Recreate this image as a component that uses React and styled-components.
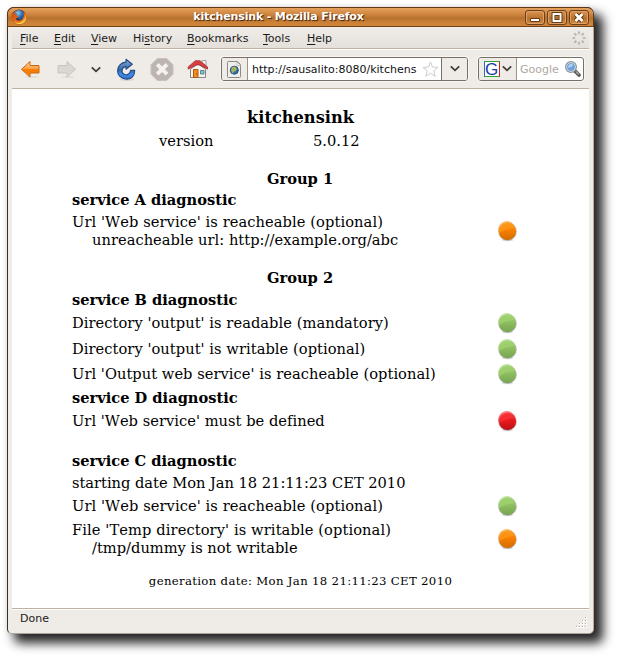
import React from "react";
import styled, { createGlobalStyle } from "styled-components";

const Global = createGlobalStyle`
  * { box-sizing: border-box; }
  body { margin: 0; background: #fff; overflow: hidden; }
`;

const Desktop = styled.div`
  width: 617px;
  height: 658px;
  padding: 7px 0 0 7px;
  overflow: hidden;
  background: #fff;
  font-family: "DejaVu Sans", sans-serif;
`;

const Window = styled.div`
  width: 587px;
  height: 627px;
  display: flex;
  flex-direction: column;
  border: 1px solid #3a3028;
  border-right-color: #b9a995;
  border-bottom-color: #aaa39a;
  border-radius: 7px 7px 5px 5px;
  background: #efebe7;
  box-shadow: 8px 8px 11px 1px rgba(0, 0, 0, 0.86), 0 0 5px rgba(0, 0, 0, 0.08);
`;

const TitleBar = styled.div`
  height: 19px;
  flex: none;
  display: flex;
  align-items: center;
  padding: 0 4px 0 3px;
  border-radius: 6px 6px 0 0;
  border-bottom: 1px solid #70421b;
  box-shadow: 0 0 0 1px #5f3813;
  clip-path: inset(-1px -1px 0 -1px);
  background: linear-gradient(#e5a25d 0, #d68d47 25%, #bf7834 50%, #b5712f 55%, #cb8138 80%, #d08438 100%);
`;

const Title = styled.div`
  flex: 1;
  padding-left: 7px;
  text-align: center;
  font-weight: bold;
  font-size: 11px;
  letter-spacing: -0.15px;
  line-height: 18px;
  color: #fff;
  text-shadow: 1px 1px 1px #3b2109;
`;

const WindowButton = styled.div`
  width: 20px;
  height: 15px;
  margin-left: 2px;
  border: 1px solid #6e4019;
  border-radius: 3px;
  box-shadow: inset 0 0 0 1px #dca168;
  svg { display: block; margin: 0; }
`;

const MenuBar = styled.div`
  height: 22px;
  flex: none;
  margin: 0 4px;
  padding: 1px 3px 0 8px;
  display: flex;
  align-items: center;
  background: linear-gradient(#f0ede9, #e4dfd9);
  border-bottom: 1px solid #bfb09f;
  font-size: 11px;
  color: #1a1a1a;
`;

const MenuItem = styled.div`
  width: ${(p) => p.$width}px;
  line-height: 20px;
  padding-top: 1px;
  white-space: nowrap;
  u { text-underline-offset: 2px; }
`;

const Throbber = styled.svg`
  margin-left: auto;
`;

const ToolBar = styled.div`
  height: 40px;
  flex: none;
  margin: 0 4px;
  padding: 8px 4px 0 8px;
  display: flex;
  align-items: flex-start;
  border-top: 1px solid #fff;
  border-bottom: 1px solid #bfb09f;
`;

const Tool = styled.div`
  width: ${(p) => p.$width}px;
  flex: none;
  display: flex;
  padding-top: ${(p) => p.$top || 0}px;
`;

const Field = styled.div`
  width: ${(p) => p.$width}px;
  height: 24px;
  margin: -1px ${(p) => p.$gap || 0}px 0 0;
  flex: none;
  display: flex;
  align-items: center;
  border: 1px solid #786f66;
  border-radius: 3px;
  background: #fff;
  box-shadow: 0 0 0 1px #f8f6f4;
  font-size: 11px;
  white-space: nowrap;
`;

const FieldPart = styled.div`
  width: ${(p) => p.$width}px;
  height: 100%;
  flex: none;
  display: flex;
  align-items: center;
  justify-content: center;
  border-radius: ${(p) => (p.$left ? "0 2px 2px 0" : "2px 0 0 2px")};
  background: #efebe7;
  border-right: ${(p) => (p.$right ? "1px solid #9c9389" : "0")};
  border-left: ${(p) => (p.$left ? "1px solid #786f66" : "0")};
`;

const Address = styled.div`
  width: 169px;
  flex: none;
  padding: 1px 0 0 4px;
  line-height: 21px;
  color: #111;
`;

const StarSlot = styled.div`
  width: 24px;
  flex: none;
  display: flex;
  justify-content: center;
  padding-left: 2px;
`;

const Hint = styled.div`
  flex: 1;
  padding-left: 3px;
  color: #b0a89e;
`;

const Page = styled.main`
  height: 519px;
  flex: none;
  margin: 0 4px;
  padding: 16px 60px 0;
  background: #fff;
  color: #000;
  font-family: "DejaVu Serif", serif;
  font-size: 14.65px;
  font-kerning: none;
`;

const Heading = styled.h1`
  margin: 0;
  padding-top: 1px;
  font-size: 16.2px;
  line-height: 23px;
  text-align: center;
`;

const Version = styled.div`
  height: 24px;
  line-height: 24px;
  display: grid;
  grid-template-columns: 154px 1fr;
  padding-left: 87px;
`;

const Group = styled.h2`
  margin: ${(p) => p.$gap}px 0 0;
  padding-right: 1px;
  font-size: inherit;
  line-height: 24px;
  text-align: center;
`;

const Service = styled.h3`
  margin: ${(p) => p.$gap || 0}px 0 0;
  font-size: 14.63px;
  line-height: ${(p) => p.$height}px;
`;

const Check = styled.div`
  height: ${(p) => p.$height}px;
  display: flex;
  align-items: center;
  justify-content: space-between;
  line-height: 18px;
  letter-spacing: ${(p) => p.$tracking || 0}px;
  padding-right: 11px;
  white-space: nowrap;
`;

const Detail = styled.div`
  padding-left: 20px;
  letter-spacing: ${(p) => p.$tracking || 0}px;
`;

const Footer = styled.div`
  line-height: 40px;
  font-size: 11.7px;
  letter-spacing: 0.33px;
  text-align: center;
`;

const StatusBar = styled.div`
  flex: 1;
  display: flex;
  justify-content: space-between;
  margin: 0 4px;
  padding: 0 2px 0 8px;
  border-top: 1px solid #bfb09f;
  box-shadow: inset 0 1px #fff;
  font-size: 11px;
  line-height: 20px;
  color: #1a1a1a;
`;

const EngineIcon = styled.div`
  width: 16px;
  height: 16px;
  margin-right: 2px;
  border: 1px solid #32a32d;
  border-left-color: #2f64df;
  border-right-color: #e02016;
  background: #fff;
  color: #173b9f;
  text-align: center;
  font: 17px/15px "Liberation Sans", sans-serif;
`;

const Light = styled.svg`
  flex: none;
  display: block;
`;

const palette = {
  orange: ["#ffa124", "#ff9412", "#f98200", "#d36c00"],
  green: ["#a7db76", "#9dd16c", "#90c162", "#76a550"],
  red: ["#ff4242", "#f92b2f", "#ec1c20", "#bd1116"],
};

function Status({ color }) {
  const c = palette[color];
  return (
    <Light width="22" height="22" viewBox="0 0 22 22">
      <defs>
        <linearGradient id={"low" + color} x1="0" y1="0" x2="0" y2="1">
          <stop offset=".35" stopColor={c[2]} />
          <stop offset="1" stopColor={c[3]} />
        </linearGradient>
        <linearGradient id={"top" + color} x1="0" y1="0" x2="0" y2="1">
          <stop offset="0" stopColor={c[0]} />
          <stop offset="1" stopColor={c[1]} />
        </linearGradient>
      </defs>
      <ellipse cx="11.5" cy="20" rx="5.8" ry="1.3" fill="#000" opacity=".13" />
      <circle cx="11.5" cy="11.5" r="9.3" fill="#777" opacity=".5" />
      <circle cx="11.5" cy="11.5" r="8.6" fill={"url(#low" + color + ")"} />
      <path d="M3.1 13.3A8.6 8.6 0 1 1 19.3 8C13 8.5 8 10.3 3.1 13.3z" fill={"url(#top" + color + ")"} opacity=".7" />
    </Light>
  );
}

const Chevron = () => (
  <svg width="10" height="8" viewBox="0 0 10 8">
    <path d="M.8 1.3 5 5.3l4.2-4" fill="none" stroke="#403d3a" strokeWidth="1.8" />
  </svg>
);

const Firefox = () => (
  <svg width="16" height="16" viewBox="0 0 16 16">
    <defs>
      <radialGradient id="globe" cx=".4" cy=".25" r=".8">
        <stop offset="0" stopColor="#8fcbea" />
        <stop offset=".45" stopColor="#2b68ab" />
        <stop offset="1" stopColor="#102654" />
      </radialGradient>
      <linearGradient id="fox" x1="0" y1="0" x2="1" y2="1">
        <stop offset="0" stopColor="#c64812" />
        <stop offset=".6" stopColor="#e87118" />
        <stop offset="1" stopColor="#ffcb45" />
      </linearGradient>
    </defs>
    <circle cx="8" cy="8" r="7.4" fill="#873f12" />
    <circle cx="8.2" cy="7.2" r="6.3" fill="url(#globe)" />
    <path d="M1.7 3 3.5 4.6 6 4.7 5.1 6.5 8.3 7.7 6.2 8.5C7 11 10.2 11.2 12 9.2 13.2 7.7 13 5.4 12.1 3.5L13.6 5 13.5 2.7C16 5.3 16 10 13.6 12.8 10.3 16.5 4.6 15.8 2 12.5-.2 9.4.2 5.8 1.7 3z" fill="url(#fox)" />
    <path d="M6.2 8.5C7 11 10.2 11.2 12 9.2 11 12 7 12.7 4.8 10z" fill="#172f5f" />
    <path d="M14.1 6C15 10 12.4 14 8 14.1 5.3 14.1 3.5 13 2.5 11.5c2.1 4.2 8.1 4.8 10.9 1.2C15 10.7 15 8 14.1 6z" fill="#ffd64b" />
  </svg>
);

const Arrow = ({ back }) => (
  <svg width="22" height="22" viewBox="0 0 22 22">
    <defs>
      <linearGradient id="back" x1="0" y1="0" x2="0" y2="1">
        <stop offset=".2" stopColor="#ffc083" />
        <stop offset=".5" stopColor="#ff9a35" />
        <stop offset=".52" stopColor="#f57900" />
        <stop offset="1" stopColor="#ff8b0c" />
      </linearGradient>
    </defs>
    <ellipse cx="12" cy="18" rx="7" ry="1.2" fill="#000" opacity=".05" />
    {back ? (
      <path d="M1.5 10.3 10 2.5v4h9v7.5h-9v4z" fill="url(#back)" stroke="#c96810" strokeLinejoin="round" />
    ) : (
      <path d="M19.5 10.3 11 2.5v4H2v7.5h9v4z" fill="#dad6d2" stroke="#c9c4bf" strokeLinejoin="round" />
    )}
  </svg>
);

const Reload = () => (
  <svg width="22" height="24" viewBox="0 0 22 24">
    <defs>
      <linearGradient id="reload" x1="0" y1="0" x2="0" y2="1">
        <stop offset="0" stopColor="#83abd8" />
        <stop offset=".55" stopColor="#3465a4" />
        <stop offset=".75" stopColor="#3f8cee" />
        <stop offset="1" stopColor="#3471c4" />
      </linearGradient>
    </defs>
    <ellipse cx="11" cy="21.5" rx="7" ry="1.5" fill="#000" opacity=".1" />
    <path d="M10 1.3 16.3 6.2 10 11.2V8.4C5.5 8.9 4.7 14.8 8.5 16.4c3 1.3 5.8-.9 6-4.1h4.2C18.9 18.1 15.3 21.4 10.5 21.1 4.9 20.8 1.4 17.2 1.6 12.5 1.8 7.7 5.3 4.4 10 4.1z" fill="url(#reload)" stroke="#204a87" strokeWidth="1.1" strokeLinejoin="round" />
  </svg>
);

const Stop = () => (
  <svg width="24" height="24" viewBox="0 0 24 24">
    <path d="M7.3.5h9.4L23 6.8v9.4l-6.3 6.3H7.3L1 16.2V6.8z" fill="#bdb5b2" stroke="#c8c1bd" />
    <path d="m7.2 6.3 9.8 9.8M17 6.3l-9.8 9.8" stroke="#f4f1ef" strokeWidth="3.9" />
  </svg>
);

const Home = () => (
  <svg width="22" height="22" viewBox="0 0 22 22">
    <path d="M15 1.5h4v7h-4z" fill="#f2f2f0" stroke="#a4a4a1" />
    <path d="M3.5 10 11 5l7.5 5v8.5h-15z" fill="#f4f4f2" stroke="#878581" />
    <path d="M1.2 7.9 8.3 1.8h4.6l7.6 6.1v2.2L12.5 5.9H9.2l-8 4.2z" fill="#d94141" stroke="#a92629" strokeWidth=".8" strokeLinejoin="round" />
    <path d="M6.5 10.5h4.5v8H6.5z" fill="#f58b1d" stroke="#b35810" />
    <path d="M13.5 11.5H17V15h-3.5z" fill="#54dbe8" stroke="#777c7c" />
    <circle cx="9.8" cy="14.8" r=".6" fill="#71380a" />
  </svg>
);

const Site = () => (
  <svg width="15" height="17" viewBox="0 0 15 17">
    <path d="M1.5.5h9l3 3v12a1 1 0 0 1-1 1h-11a1 1 0 0 1-1-1v-14a1 1 0 0 1 1-1z" fill="#efefed" stroke="#8a8a85" />
    <path d="M10 1v3.5h3.5z" fill="#fff" stroke="#aaa9a4" strokeWidth=".7" />
    <circle cx="7.3" cy="9.2" r="4" fill="#376fab" stroke="#234c7c" />
    <path d="m5 6 3-.5 2 2-1 2.3-2 1-1.8 2L4 9z" fill="#a1b45c" />
  </svg>
);

const Star = () => (
  <svg width="17" height="17" viewBox="0 0 17 17">
    <path d="m8.5 1 2 5 5.5.4-4.2 3.5 1.4 5.4-4.7-3-4.7 3 1.4-5.4L1 6.4 6.5 6z" fill="#fff" stroke="#cbcbcb" strokeLinejoin="round" />
  </svg>
);

const Search = () => (
  <svg width="19" height="18" viewBox="0 0 19 18">
    <path d="m11 11 4 4" stroke="#555753" strokeWidth="3.8" strokeLinecap="round" />
    <path d="m12 11.5 3 3" stroke="#aaa" strokeWidth="1.5" />
    <circle cx="7" cy="7" r="5.3" fill="#71a3db" stroke="#94968f" strokeWidth="1.4" />
    <circle cx="7" cy="7" r="4.4" fill="none" stroke="#d6e3f3" strokeWidth=".8" />
    <path d="M4 7.5C4 4.9 6 3.4 8.8 3.9 9 6.2 7 7.7 4 7.5z" fill="#b4d0ee" />
  </svg>
);

const menus = [["", "F", "ile", 34], ["", "E", "dit", 37], ["", "V", "iew", 42], ["Hi", "s", "tory", 54], ["", "B", "ookmarks", 76], ["", "T", "ools", 44], ["", "H", "elp", 40]];
const spokes = [0, 45, 90, 135, 180, 225, 270, 315];
const grip = [[9, 0], [6, 3], [9, 3], [3, 6], [6, 6], [9, 6], [0, 9], [3, 9], [6, 9], [9, 9]];

export default function App() {
  return (
    <Desktop>
      <Global />
      <Window>
        <TitleBar>
          <Firefox />
          <Title>kitchensink - Mozilla Firefox</Title>
          <WindowButton><svg width="18" height="13"><path d="M4.5 7.5h9v3h-9z" fill="#fff" stroke="#683b16" /></svg></WindowButton>
          <WindowButton><svg width="18" height="13"><path d="M5.5 3h7v7h-7z" fill="none" stroke="#683b16" strokeWidth="3.8" /><path d="M5.5 3h7v7h-7z" fill="none" stroke="#fff" strokeWidth="1.9" /></svg></WindowButton>
          <WindowButton><svg width="18" height="13"><path d="m5.5 3 7 7m0-7-7 7" stroke="#683b16" strokeWidth="4.6" /><path d="m5.5 3 7 7m0-7-7 7" stroke="#fff" strokeWidth="2.6" /></svg></WindowButton>
        </TitleBar>
        <MenuBar>
          {menus.map(([before, key, after, width]) => (
            <MenuItem key={key} $width={width}>{before}<u>{key}</u>{after}</MenuItem>
          ))}
          <Throbber width="14" height="14" viewBox="-7 -7 14 14">
            {spokes.map((a) => <rect key={a} x="-1.1" y="-6.7" width="2.2" height="3" rx=".8" fill="#bcb7b2" transform={`rotate(${a})`} />)}
          </Throbber>
        </MenuBar>
        <ToolBar>
          <Tool $width={36} $top={1}><Arrow back /></Tool>
          <Tool $width={35} $top={1}><Arrow /></Tool>
          <Tool $width={25} $top={8}><Chevron /></Tool>
          <Tool $width={34}><Reload /></Tool>
          <Tool $width={37}><Stop /></Tool>
          <Tool $width={34} $top={1}><Home /></Tool>
          <Field $width={247} $gap={10}>
            <FieldPart $width={26} $right><Site /></FieldPart>
            <Address>http://sausalito:8080/kitchens</Address>
            <StarSlot><Star /></StarSlot>
            <FieldPart $width={26} $left><Chevron /></FieldPart>
          </Field>
          <Field $width={106}>
            <FieldPart $width={38} $right><EngineIcon>G</EngineIcon><Chevron /></FieldPart>
            <Hint>Google</Hint>
            <Search />
          </Field>
        </ToolBar>
        <Page>
          <Heading>kitchensink</Heading>
          <Version><span>version</span><span>5.0.12</span></Version>
          <Group $gap={14}>Group 1</Group>
          <Service $height={18}>service A diagnostic</Service>
          <Check $height={44} $tracking={0.08}>
            <div>Url 'Web service' is reacheable (optional)<Detail $tracking={0.03}>unreacheable url: http://example.org/abc</Detail></div>
            <Status color="orange" />
          </Check>
          <Group $gap={13}>Group 2</Group>
          <Service $height={20}>service B diagnostic</Service>
          <Check $height={26} $tracking={0.05}>Directory 'output' is readable (mandatory)<Status color="green" /></Check>
          <Check $height={26} $tracking={0.05}>Directory 'output' is writable (optional)<Status color="green" /></Check>
          <Check $height={24} $tracking={0.04}>Url 'Output web service' is reacheable (optional)<Status color="green" /></Check>
          <Service $height={24}>service D diagnostic</Service>
          <Check $height={22} $tracking={0.03}>Url 'Web service' must be defined<Status color="red" /></Check>
          <Service $gap={19} $height={20}>service C diagnostic</Service>
          <Check $height={24} $tracking={-0.02}>starting date Mon Jan 18 21:11:23 CET 2010</Check>
          <Check $height={22} $tracking={0.08}>Url 'Web service' is reacheable (optional)<Status color="green" /></Check>
          <Check $height={44} $tracking={0.1}>
            <div>File 'Temp directory' is writable (optional)<Detail>/tmp/dummy is not writable</Detail></div>
            <Status color="orange" />
          </Check>
          <Footer>generation date: Mon Jan 18 21:11:23 CET 2010</Footer>
        </Page>
        <StatusBar>
          Done
          <svg width="11" height="20" viewBox="0 -8 11 20">
            {grip.map(([x, y]) => <g key={x + "-" + y}><rect x={x} y={y} width="2" height="2" fill="#fff" /><rect x={x} y={y} width="1" height="1" fill="#b7aa9b" /></g>)}
          </svg>
        </StatusBar>
      </Window>
    </Desktop>
  );
}
